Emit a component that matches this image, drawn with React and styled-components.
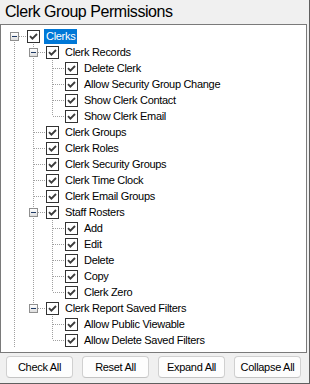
import styled, { createGlobalStyle } from "styled-components";

const GlobalStyle = createGlobalStyle`
  html, body {
    margin: 0;
    padding: 0;
    background: #f0f0f0;
  }
  body {
    font-family: "Liberation Sans", Arial, sans-serif;
  }
`;

const ROW = 16;
const INDENT = 19;
const LINE = "#a0a0a0";

const tree = [
  {
    label: "Clerks",
    selected: true,
    children: [
      {
        label: "Clerk Records",
        children: [
          { label: "Delete Clerk" },
          { label: "Allow Security Group Change" },
          { label: "Show Clerk Contact" },
          { label: "Show Clerk Email" },
        ],
      },
      { label: "Clerk Groups" },
      { label: "Clerk Roles" },
      { label: "Clerk Security Groups" },
      { label: "Clerk Time Clock" },
      { label: "Clerk Email Groups" },
      {
        label: "Staff Rosters",
        children: [
          { label: "Add" },
          { label: "Edit" },
          { label: "Delete" },
          { label: "Copy" },
          { label: "Clerk Zero" },
        ],
      },
      {
        label: "Clerk Report Saved Filters",
        children: [
          { label: "Allow Public Viewable" },
          { label: "Allow Delete Saved Filters" },
        ],
      },
    ],
  },
];

// flatten; the root continues below the visible area, so its line keeps going
function flatten(nodes, guides = [], out = [], isRoot = true) {
  nodes.forEach((node, i) => {
    const hasNext = isRoot ? true : i < nodes.length - 1;
    const first = isRoot && i === 0;
    out.push({ ...node, guides, hasNext, first });
    if (node.children) flatten(node.children, [...guides, hasNext], out, false);
  });
  return out;
}

const Window = styled.div`
  width: 310px;
  height: 384px;
  box-sizing: border-box;
  border-right: 1px solid #5f5f5f;
  border-bottom: 1px solid #5f5f5f;
  background: #f0f0f0;
  display: flex;
  flex-direction: column;
`;

const Title = styled.div`
  height: 24px;
  padding-left: 5px;
  display: flex;
  align-items: center;
  font-size: 16px;
  letter-spacing: -0.45px;
  color: #000;
`;

const TreePanel = styled.div`
  width: 307px;
  height: 329px;
  box-sizing: border-box;
  border: 1px solid #7a7a7a;
  background: #fff;
  padding-top: 3px;
  overflow: hidden;
`;

const Row = styled.div`
  height: ${ROW}px;
  display: flex;
  align-items: center;
`;

const dotsV = `repeating-linear-gradient(to bottom, ${LINE} 0 1px, transparent 1px 2px)`;
const dotsH = `repeating-linear-gradient(to right, ${LINE} 0 1px, transparent 1px 2px)`;

const Guide = styled.div`
  width: ${INDENT}px;
  height: ${ROW}px;
  flex: none;
  background-image: ${(p) => (p.$line ? dotsV : "none")};
  background-size: 1px ${ROW}px;
  background-position: 13px 0;
  background-repeat: no-repeat;
`;

const NodeCell = styled.div`
  width: 26px;
  height: ${ROW}px;
  flex: none;
  display: flex;
  align-items: center;
  padding-left: 9px;
  box-sizing: border-box;
  background-image: ${dotsH}, ${(p) => (p.$top ? dotsV : "none")},
    ${(p) => (p.$bottom ? dotsV : "none")};
  background-size: 12px 1px, 1px 8px, 1px 8px;
  background-position: 14px 8px, 13px 0, 13px 8px;
  background-repeat: no-repeat;
`;

const Expander = styled.div`
  width: 9px;
  height: 9px;
  box-sizing: border-box;
  border: 1px solid #8f8f8f;
  background: linear-gradient(#ffffff, #dedede);
  display: flex;
  align-items: center;
  justify-content: center;

  &::after {
    content: "";
    width: 5px;
    height: 1px;
    background: #1f3a64;
  }
`;

const Check = styled.div`
  width: 13px;
  height: 13px;
  flex: none;
  box-sizing: border-box;
  border: 1px solid #333;
  background: #fff;
  display: flex;
  align-items: center;
  justify-content: center;
`;

const Label = styled.span`
  margin-left: 4px;
  padding: 0 2px;
  height: 15px;
  line-height: 15px;
  font-size: 11px;
  letter-spacing: -0.3px;
  white-space: nowrap;
  color: ${(p) => (p.$selected ? "#fff" : "#000")};
  background: ${(p) => (p.$selected ? "#0078d7" : "transparent")};
`;

const ButtonBar = styled.div`
  flex: 1;
  display: flex;
  gap: 9px;
  padding: 3px 0 0 6px;
`;

const Button = styled.button`
  width: 67px;
  height: 22px;
  padding: 0;
  box-sizing: border-box;
  border: 1px solid #d0d0d0;
  border-bottom-color: #c4c4c4;
  border-radius: 4px;
  background: #fdfdfd;
  font-family: "Liberation Sans", Arial, sans-serif;
  font-size: 11px;
  letter-spacing: -0.3px;
  color: #000;
`;

function CheckMark() {
  return (
    <svg width="11" height="11" viewBox="0 0 11 11">
      <path
        d="M2 5.2 L4.4 7.6 L9 3"
        fill="none"
        stroke="#3c3c3c"
        strokeWidth="1.9"
      />
    </svg>
  );
}

function TreeRow({ item }) {
  return (
    <Row>
      {item.guides.map((line, i) => (
        <Guide key={i} $line={line} />
      ))}
      <NodeCell $top={!item.first} $bottom={item.hasNext}>
        {item.children && <Expander />}
      </NodeCell>
      <Check>
        <CheckMark />
      </Check>
      <Label $selected={item.selected}>{item.label}</Label>
    </Row>
  );
}

export default function App() {
  const rows = flatten(tree);
  return (
    <>
      <GlobalStyle />
      <Window>
        <Title>Clerk Group Permissions</Title>
        <TreePanel>
          {rows.map((item, i) => (
            <TreeRow key={i} item={item} />
          ))}
        </TreePanel>
        <ButtonBar>
          <Button>Check All</Button>
          <Button>Reset All</Button>
          <Button>Expand All</Button>
          <Button>Collapse All</Button>
        </ButtonBar>
      </Window>
    </>
  );
}
